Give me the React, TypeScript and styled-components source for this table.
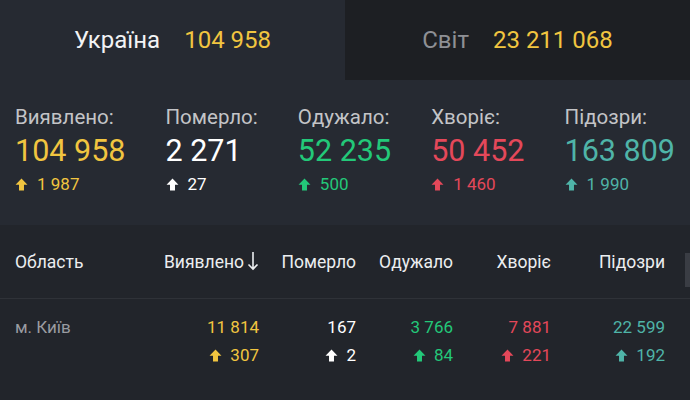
import React from 'react'
import styled, {createGlobalStyle} from 'styled-components'

const GlobalStyle = createGlobalStyle`
  html, body {
    margin: 0;
    padding: 0;
    background: #22252b;
  }
  body {
    font-family: Roboto, "Liberation Sans", sans-serif;
    -webkit-font-smoothing: antialiased;
  }
`

const colors = {
  yellow: '#f1c540',
  white: '#ffffff',
  green: '#23c879',
  red: '#e4485a',
  teal: '#4fb4a8',
}

const Page = styled.div`
  width: 690px;
  height: 400px;
  overflow: hidden;
  background: #22252b;
`

const Tabs = styled.div`
  display: grid;
  grid-template-columns: 345px 345px;
  height: 80px;
`

const Tab = styled.div<{active?: boolean}>`
  display: flex;
  align-items: center;
  justify-content: center;
  gap: 24px;
  background: ${p => (p.active ? '#262a32' : '#1d1f23')};
  font-size: 24px;
`

const TabLabel = styled.span<{active?: boolean}>`
  color: ${p => (p.active ? '#f2f3f5' : '#8e9095')};
`

const TabValue = styled.span`
  color: ${colors.yellow};
`

const Stats = styled.div`
  display: flex;
  justify-content: space-between;
  padding: 26px 15px 0;
  height: 119px;
  background: #262a32;
`

const Stat = styled.div`
  display: flex;
  flex-direction: column;
`

const StatLabel = styled.div`
  color: #c3c4c7;
  font-size: 20.5px;
  line-height: 22px;
`

const StatValue = styled.div<{color: string}>`
  color: ${p => p.color};
  font-size: 30.5px;
  line-height: 34px;
  margin-top: 6px;
`

const StatDelta = styled.div<{color: string}>`
  display: flex;
  align-items: center;
  gap: 9px;
  color: ${p => p.color};
  font-size: 17px;
  line-height: 20px;
  margin-top: 6px;
`

const Table = styled.div`
  position: relative;
  background: #22252b;
`

const Grid = styled.div`
  display: grid;
  grid-template-columns: 1fr 96px 97px 97px 98px 114px;
  padding: 0 25px 0 15px;
`

const HeadRow = styled(Grid)`
  height: 73px;
  align-items: center;
  border-bottom: 1px solid #2f3238;
`

const HeadCell = styled.div<{first?: boolean}>`
  display: flex;
  align-items: center;
  justify-content: ${p => (p.first ? 'flex-start' : 'flex-end')};
  gap: 3px;
  color: #eceef0;
  font-size: 17.5px;
  white-space: nowrap;
`

const SortArrow = styled.svg`
  display: block;
  margin-top: -2px;
`

const BodyRow = styled(Grid)`
  padding-top: 17px;
  padding-bottom: 16px;
`

const Region = styled.div`
  color: #9a9ca1;
  font-size: 17px;
  line-height: 22px;
`

const Cell = styled.div`
  display: flex;
  flex-direction: column;
  align-items: flex-end;
  gap: 6px;
`

const CellValue = styled.div<{color: string}>`
  color: ${p => p.color};
  font-size: 17px;
  line-height: 22px;
`

const CellDelta = styled.div<{color: string}>`
  display: flex;
  align-items: center;
  gap: 8px;
  color: ${p => p.color};
  font-size: 17px;
  line-height: 22px;
`

const ScrollThumb = styled.div`
  position: absolute;
  right: 0;
  top: 28px;
  width: 5px;
  height: 34px;
  background: #3a3d44;
`

const UpArrow = ({color, size = 12}: {color: string; size?: number}) => (
  <svg width={size} height={size} viewBox="0 0 12 12">
    <path d="M6 0.5 L11.5 6.2 L8.3 6.2 L8.3 11.5 L3.7 11.5 L3.7 6.2 L0.5 6.2 Z" fill={color} />
  </svg>
)

const stats = [
  {label: 'Виявлено:', value: '104 958', delta: '1 987', color: colors.yellow},
  {label: 'Померло:', value: '2 271', delta: '27', color: colors.white},
  {label: 'Одужало:', value: '52 235', delta: '500', color: colors.green},
  {label: 'Хворіє:', value: '50 452', delta: '1 460', color: colors.red},
  {label: 'Підозри:', value: '163 809', delta: '1 990', color: colors.teal},
]

const row = [
  {value: '11 814', delta: '307', color: colors.yellow},
  {value: '167', delta: '2', color: colors.white},
  {value: '3 766', delta: '84', color: colors.green},
  {value: '7 881', delta: '221', color: colors.red},
  {value: '22 599', delta: '192', color: colors.teal},
]

const App: React.FC = () => (
  <Page>
    <GlobalStyle />
    <Tabs>
      <Tab active>
        <TabLabel active>Україна</TabLabel>
        <TabValue>104 958</TabValue>
      </Tab>
      <Tab>
        <TabLabel>Світ</TabLabel>
        <TabValue>23 211 068</TabValue>
      </Tab>
    </Tabs>
    <Stats>
      {stats.map(s => (
        <Stat key={s.label}>
          <StatLabel>{s.label}</StatLabel>
          <StatValue color={s.color}>{s.value}</StatValue>
          <StatDelta color={s.color}>
            <UpArrow color={s.color} size={13} />
            {s.delta}
          </StatDelta>
        </Stat>
      ))}
    </Stats>
    <Table>
      <HeadRow>
        <HeadCell first>Область</HeadCell>
        <HeadCell>
          Виявлено
          <SortArrow width="12" height="20" viewBox="0 0 12 20">
            <path d="M6 1 V18 M1.5 13.5 L6 18 L10.5 13.5" stroke="#eceef0" strokeWidth="1.6" fill="none" />
          </SortArrow>
        </HeadCell>
        <HeadCell>Померло</HeadCell>
        <HeadCell>Одужало</HeadCell>
        <HeadCell>Хворіє</HeadCell>
        <HeadCell>Підозри</HeadCell>
      </HeadRow>
      <BodyRow>
        <Region>м. Київ</Region>
        {row.map((c, i) => (
          <Cell key={i}>
            <CellValue color={c.color}>{c.value}</CellValue>
            <CellDelta color={c.color}>
              <UpArrow color={c.color} size={13} />
              {c.delta}
            </CellDelta>
          </Cell>
        ))}
      </BodyRow>
      <ScrollThumb />
    </Table>
  </Page>
)

export default App
